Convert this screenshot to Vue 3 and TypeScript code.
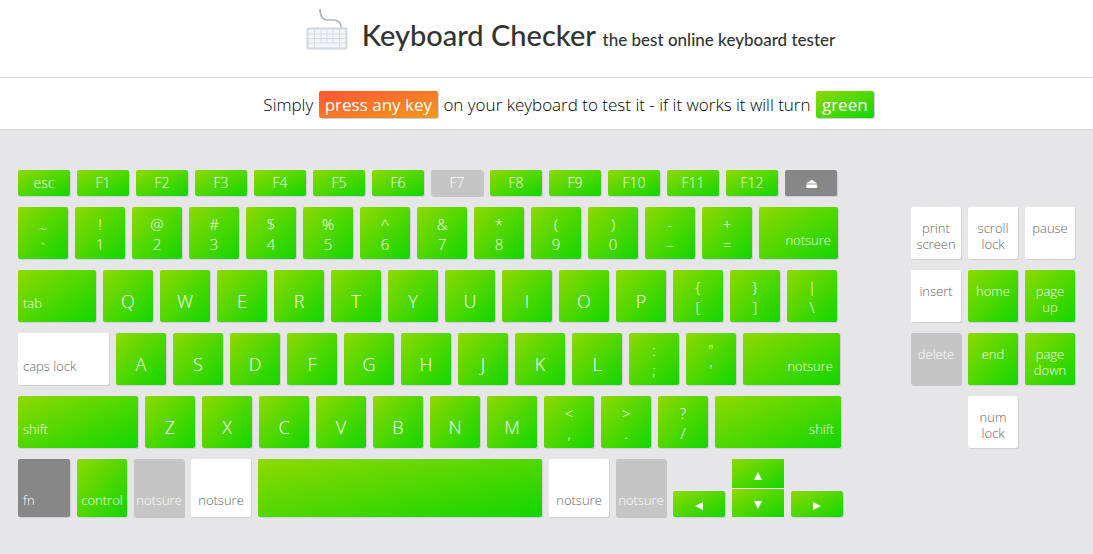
<script setup lang="ts">
type State = 'green' | 'plain' | 'grey' | 'dark'
type Kind = 'fn' | 'dual' | 'letter' | 'label' | 'nav' | 'tick'

interface Key {
  lines: string[]
  kind: Kind
  size: string
  state: State
  align?: 'left' | 'right' | 'center'
}

const fnKey = (text: string, state: State = 'green'): Key => ({ lines: [text], kind: 'fn', size: 'w52', state })
const dual = (top: string, bottom: string): Key => ({ lines: [top, bottom], kind: 'dual', size: 'w50', state: 'green' })
const letters = (text: string): Key[] =>
  text.split('').map((c) => ({ lines: [c], kind: 'letter', size: 'w50', state: 'green' }))
const label = (
  text: string,
  size: string,
  align: 'left' | 'right' | 'center' = 'left',
  state: State = 'green'
): Key => ({ lines: [text], kind: 'label', size, state, align })
const nav = (text: string, state: State = 'plain'): Key => ({
  lines: text.split(' '),
  kind: 'nav',
  size: 'w50',
  state,
})

const rows: Key[][] = [
  [
    fnKey('esc'), fnKey('F1'), fnKey('F2'), fnKey('F3'), fnKey('F4'), fnKey('F5'), fnKey('F6'),
    fnKey('F7', 'grey'), fnKey('F8'), fnKey('F9'), fnKey('F10'), fnKey('F11'), fnKey('F12'), fnKey('⏏', 'dark'),
  ],
  [
    { lines: ['~', '`'], kind: 'tick', size: 'w50', state: 'green' },
    dual('!', '1'), dual('@', '2'), dual('#', '3'), dual('$', '4'), dual('%', '5'), dual('^', '6'),
    dual('&', '7'), dual('*', '8'), dual('(', '9'), dual(')', '0'), dual('-', '–'), dual('+', '='),
    label('notsure', 'w79', 'right'),
  ],
  [label('tab', 'w78'), ...letters('QWERTYUIOP'), dual('{', '['), dual('}', ']'), dual('|', '\\')],
  [
    label('caps lock', 'w91', 'left', 'plain'), ...letters('ASDFGHJKL'), dual(':', ';'), dual('"', "'"),
    label('notsure', 'w97', 'right'),
  ],
  [
    label('shift', 'w120'), ...letters('ZXCVBNM'), dual('<', ','), dual('>', '.'), dual('?', '/'),
    label('shift', 'w126', 'right'),
  ],
]

const bottomRow: Key[] = [
  label('fn', 'w52', 'left', 'dark'),
  label('control', 'w50', 'center'),
  label('notsure', 'w50', 'center', 'grey'),
  label('notsure', 'w60', 'center', 'plain'),
  label('', 'w284'),
  label('notsure', 'w60', 'center', 'plain'),
  label('notsure', 'w50', 'center', 'grey'),
]

const navKeys: Key[] = [
  nav('print screen'), nav('scroll lock'), nav('pause'),
  nav('insert'), nav('home', 'green'), nav('page up', 'green'),
  nav('delete', 'grey'), nav('end', 'green'), nav('page down', 'green'),
  nav('num lock'),
]

const classes = (key: Key) => ['key', key.kind, key.size, key.state, key.align]
</script>

<template>
  <div class="page">
    <header class="masthead">
      <svg class="logo" width="42" height="42" viewBox="0 0 42 42" aria-hidden="true">
        <path d="M14 0 C14 7 17 11 22 11 H27 C32 11 35 13 35.500 19" fill="none" stroke="#abb2bb" stroke-width="1.600" />
        <rect x="1.500" y="19.500" width="39" height="20" rx="1" fill="#f3f4f6" stroke="#cfd6e1" stroke-width="1.800" />
        <path
          d="M2 25 H40 M2 29.500 H40 M2 34 H40 M8.500 20 V39 M15 20 V34 M21 20 V34 M27 20 V34 M33.500 20 V39"
          fill="none" stroke="#d5dbe4" stroke-width="1"
        />
      </svg>
      <h1>Keyboard Checker <small>the best online keyboard tester</small></h1>
    </header>
    <p class="intro">
      Simply <span class="badge orange">press any key</span> on your keyboard to test it - if it works it will turn
      <span class="badge green">green</span>
    </p>
    <main class="board">
      <section class="main-keys" aria-label="Main keys">
        <div v-for="(row, r) in rows" :key="r" class="row">
          <button v-for="(key, k) in row" :key="k" type="button" :class="classes(key)">
            <span v-for="line in key.lines" :key="line">{{ line }}</span>
          </button>
        </div>
        <div class="row bottom">
          <button
            v-for="(key, k) in bottomRow" :key="k" type="button" :class="classes(key)"
            :aria-label="key.lines[0] || 'space'"
          >
            <span v-for="line in key.lines" :key="line">{{ line }}</span>
          </button>
          <button type="button" class="key arrow w52 green" aria-label="Left">
            <svg width="8" height="8" viewBox="0 0 8 8"><path d="M8 0 V8 L0 4 Z" /></svg>
          </button>
          <div class="stack">
            <button type="button" class="key arrow w52 green" aria-label="Up">
              <svg width="8" height="8" viewBox="0 0 8 8"><path d="M0 8 H8 L4 0 Z" /></svg>
            </button>
            <button type="button" class="key arrow w52 green" aria-label="Down">
              <svg width="8" height="8" viewBox="0 0 8 8"><path d="M0 0 H8 L4 8 Z" /></svg>
            </button>
          </div>
          <button type="button" class="key arrow w52 green" aria-label="Right">
            <svg width="8" height="8" viewBox="0 0 8 8"><path d="M0 0 V8 L8 4 Z" /></svg>
          </button>
        </div>
      </section>
      <section class="nav-keys" aria-label="Navigation keys">
        <button v-for="(key, k) in navKeys" :key="k" type="button" :class="classes(key)">
          <span v-for="line in key.lines" :key="line">{{ line }}</span>
        </button>
      </section>
    </main>
  </div>
</template>

<style>
body {
  background: #e6e6e8;
}
</style>

<style scoped>
.page {
  font-family: 'Open Sans', 'Noto Sans', sans-serif;
  font-weight: 300;
  color: #000;
}
.masthead {
  display: flex;
  justify-content: center;
  align-items: flex-start;
  gap: 14px;
  box-sizing: border-box;
  height: 78px;
  padding: 9px 0 0 48px;
  background: #fff;
  border-bottom: 1px solid #d9d9db;
}
h1 {
  margin: 0;
  padding-top: 6px;
  font-family: Lato, sans-serif;
  font-size: 29px;
  line-height: 40px;
  font-weight: 500;
  color: #333;
}
h1 small {
  font-size: 17px;
}
.intro {
  margin: 0;
  padding: 13px 0 10px 45px;
  background: #fff;
  border-bottom: 1px solid #d9d9db;
  font-size: 17px;
  line-height: 28px;
  text-align: center;
}
.badge {
  display: inline-block;
  margin: 0 1px;
  padding: 0 6px;
  border-radius: 2px;
  line-height: 27px;
  font-weight: 400;
  color: #fff;
  box-shadow: 1px 1px 0 #d0d0d6;
}
.orange {
  background: linear-gradient(to bottom right, #ff5534, #f09a1c);
}
.board {
  display: flex;
  justify-content: space-between;
  align-items: flex-start;
  padding: 40px 18px 37px;
}
.main-keys {
  display: flex;
  flex-direction: column;
  gap: 11px;
}
.row {
  display: flex;
  gap: 7px;
}
.nav-keys {
  display: grid;
  grid-template-columns: repeat(3, 50px);
  gap: 11px 7px;
  padding-top: 37px;
}
.nav-keys .key:last-child {
  grid-column: 2;
}
.key {
  display: flex;
  flex-direction: column;
  align-items: center;
  box-sizing: border-box;
  flex: none;
  height: 52px;
  margin: 0;
  padding: 0;
  border: 0;
  border-radius: 2px;
  font-family: inherit;
  font-weight: 300;
  font-size: 13px;
  line-height: 16px;
  color: #f2ffee;
  box-shadow: 1px 1px 0 #cfcfd6;
}
.green {
  background: linear-gradient(to bottom right, #8fd900, #12d600);
}
.plain {
  background: #fff;
  color: #666;
}
.grey {
  background: #c5c5c5;
  color: #fff;
  box-shadow: 1px 1px 0 #c5c5c5;
}
.dark {
  background: #878787;
  color: #fff;
}
.fn {
  height: 26px;
  justify-content: center;
  font-size: 14px;
}
.dual {
  padding-top: 7px;
  font-size: 15px;
  line-height: 20px;
}
.tick {
  padding-top: 11px;
  font-size: 15px;
  line-height: 20px;
}
.letter {
  padding-top: 20px;
  font-size: 18px;
  line-height: 22px;
  color: #fff;
}
.label {
  justify-content: flex-end;
  padding: 0 7px 11px 5px;
}
.nav {
  padding-top: 13px;
}
.left {
  align-items: flex-start;
}
.right {
  align-items: flex-end;
}
.center {
  padding-right: 0;
  padding-left: 0;
}
.bottom {
  align-items: flex-end;
}
.bottom .label {
  height: 58px;
  padding-bottom: 9px;
}
.arrow {
  height: 26px;
  justify-content: center;
}
.arrow svg {
  fill: #fff;
  margin-top: 4px;
}
.stack {
  display: flex;
  flex-direction: column;
  gap: 1px;
  background: #fff;
}
.stack .key {
  height: 29px;
  border-radius: 0;
  box-shadow: none;
}
.stack .key:last-child {
  height: 28px;
}
.w50 { width: 50px; }
.w52 { width: 52px; }
.w60 { width: 60px; }
.w78 { width: 78px; }
.w79 { width: 79px; }
.w91 { width: 91px; }
.w97 { width: 97px; }
.w120 { width: 120px; }
.w126 { width: 126px; }
.w284 { width: 284px; }
</style>
